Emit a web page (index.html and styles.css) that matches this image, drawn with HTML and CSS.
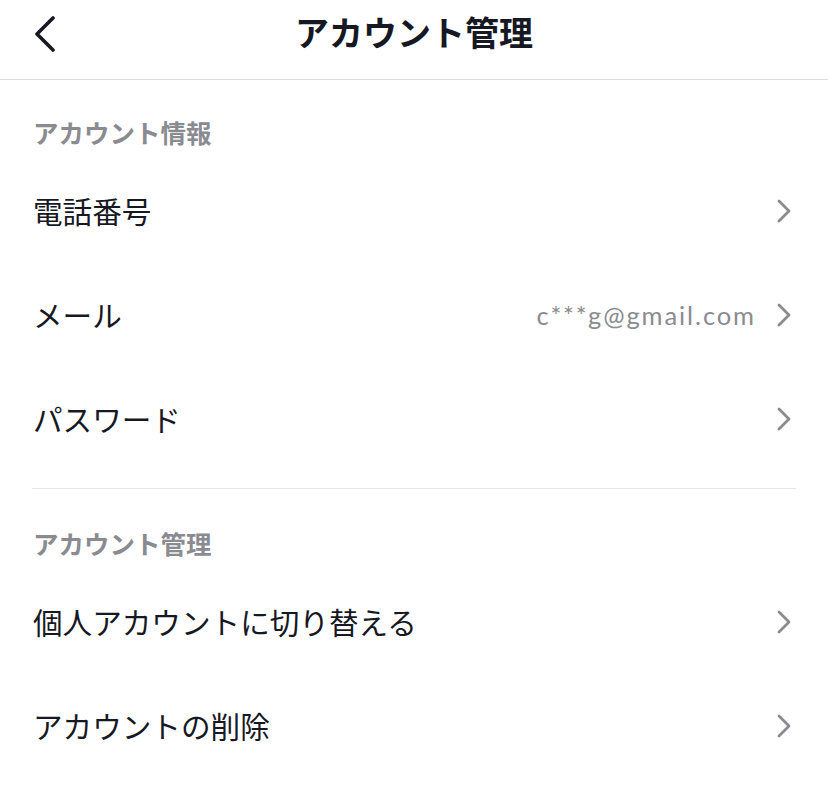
FILE: index.html
```html
<!DOCTYPE html>
<html lang="ja">
<head>
<meta charset="utf-8">
<title>アカウント管理</title>
<link rel="stylesheet" href="styles.css">
</head>
<body>
<header class="nav">
  <button class="back" aria-label="戻る">
    <svg width="22" height="36" viewBox="0 0 22 36"><path d="M19 2 L3 18 L19 34" fill="none" stroke="#161823" stroke-width="3.6" stroke-linecap="round" stroke-linejoin="round"/></svg>
  </button>
  <h1 class="title">アカウント管理</h1>
</header>
<main>
  <section class="group">
    <h2 class="group-title">アカウント情報</h2>
    <div class="row"><span class="label">電話番号</span><span class="right"><svg class="chev" width="14" height="24" viewBox="0 0 14 24"><path d="M2 2 L12 12 L2 22" fill="none" stroke="#8a8b91" stroke-width="2.8" stroke-linecap="round" stroke-linejoin="round"/></svg></span></div>
    <div class="row"><span class="label">メール</span><span class="right"><span class="value">c***g@gmail.com</span><svg class="chev" width="14" height="24" viewBox="0 0 14 24"><path d="M2 2 L12 12 L2 22" fill="none" stroke="#8a8b91" stroke-width="2.8" stroke-linecap="round" stroke-linejoin="round"/></svg></span></div>
    <div class="row"><span class="label">パスワード</span><span class="right"><svg class="chev" width="14" height="24" viewBox="0 0 14 24"><path d="M2 2 L12 12 L2 22" fill="none" stroke="#8a8b91" stroke-width="2.8" stroke-linecap="round" stroke-linejoin="round"/></svg></span></div>
  </section>
  <hr class="divider">
  <section class="group">
    <h2 class="group-title">アカウント管理</h2>
    <div class="row"><span class="label">個人アカウントに切り替える</span><span class="right"><svg class="chev" width="14" height="24" viewBox="0 0 14 24"><path d="M2 2 L12 12 L2 22" fill="none" stroke="#8a8b91" stroke-width="2.8" stroke-linecap="round" stroke-linejoin="round"/></svg></span></div>
    <div class="row"><span class="label">アカウントの削除</span><span class="right"><svg class="chev" width="14" height="24" viewBox="0 0 14 24"><path d="M2 2 L12 12 L2 22" fill="none" stroke="#8a8b91" stroke-width="2.8" stroke-linecap="round" stroke-linejoin="round"/></svg></span></div>
  </section>
</main>
</body>
</html>
```
FILE: styles.css
```css
* { box-sizing: border-box; }
html, body {
  margin: 0;
  padding: 0;
  background: #ffffff;
}
body {
  font-family: "Noto Sans CJK JP", "Noto Sans", sans-serif;
  color: #161823;
  width: 828px;
}
.nav {
  height: 80px;
  border-bottom: 1px solid #dcdcdf;
  display: grid;
  grid-template-columns: 1fr auto 1fr;
  align-items: center;
  padding-bottom: 12px;
}
.back {
  background: none;
  border: 0;
  padding: 0 0 0 34px;
  justify-self: start;
  display: flex;
  align-items: center;
}
.title {
  margin: 0 0 3px;
  font-size: 34px;
  font-weight: 700;
  line-height: 40px;
  letter-spacing: 0;
}
.group-title {
  margin: 0;
  padding: 39px 33px 16px;
  font-size: 25.5px;
  line-height: 26px;
  font-weight: 700;
  color: #8a8b91;
}
.row {
  height: 104px;
  display: flex;
  align-items: center;
  justify-content: space-between;
  padding: 0 37px 4px 33px;
}
.label {
  font-size: 29.6px;
  line-height: 40px;
  color: #161823;
}
.right {
  display: flex;
  align-items: center;
  gap: 21px;
}
.value {
  font-family: "Lato", "Liberation Sans", sans-serif;
  font-size: 25.5px;
  letter-spacing: 1.9px;
  color: #8a8b91;
  line-height: 40px;
}
.chev { display: block; }
.divider {
  margin: 15px 32px 2px;
  border: 0;
  border-top: 1px solid #e6e6e8;
  height: 0;
}
```
